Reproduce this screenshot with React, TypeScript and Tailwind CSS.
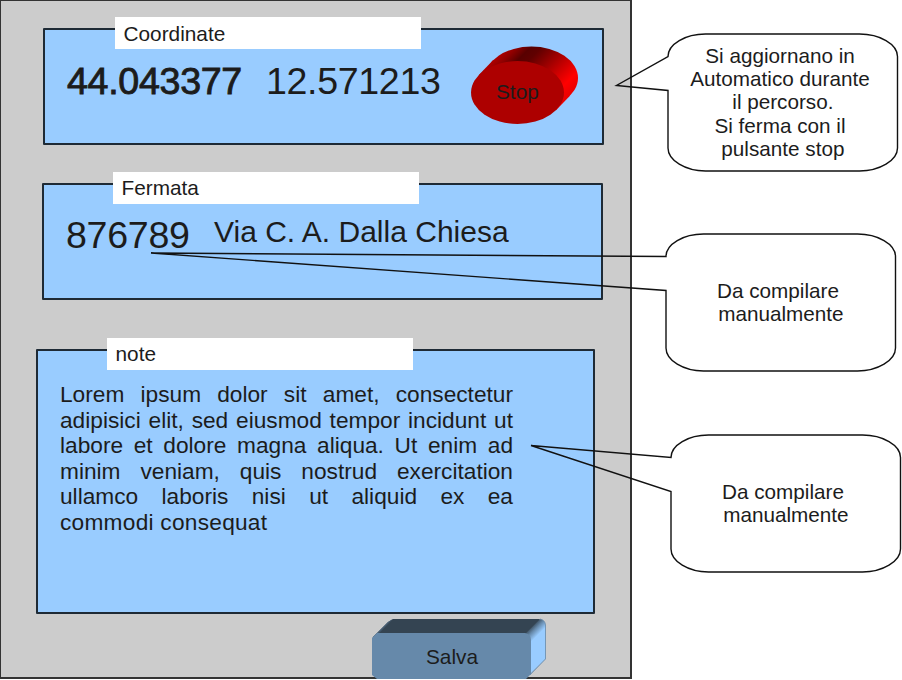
import type { ReactNode } from "react";

function Label({ children, className }: { children: ReactNode; className: string }) {
  return (
    <div
      className={`absolute flex h-8 w-[306px] items-center bg-white pl-[8.5px] text-[20.8px] ${className}`}
    >
      {children}
    </div>
  );
}

function Callout({
  tail,
  lines,
  className,
}: {
  tail: [number, number];
  lines: string[];
  className: string;
}) {
  return (
    <div className={`relative flex h-[138px] w-[230px] flex-col items-center justify-center pr-[6px] ${className}`}>
      <svg
        className="pointer-events-none absolute inset-0 overflow-visible"
        width="230"
        height="138"
        fill="none"
        stroke="#111"
        strokeWidth="1.4"
      >
        <path
          d={`M37.500 1H191.500C211.500 1 229.500 11 229.500 23.500V115C229.500 127.500 211.500 138 191.500 138H37.500C17.500 138 0 127.500 0 115V57.500L${tail[0]} ${tail[1]}L0 23.500C0 11 17.500 1 37.500 1Z`}
        />
      </svg>
      {lines.map((line) => (
        <div key={line} className="whitespace-pre text-[20.7px] leading-[23.3px]">
          {line}
        </div>
      ))}
    </div>
  );
}

function StopButton() {
  return (
    <button className="relative mt-[16px] ml-[29px] h-[79px] w-[109px]">
      <svg className="absolute inset-0" width="109" height="79">
        <defs>
          <linearGradient id="stopSide" gradientUnits="userSpaceOnUse" x1="18" y1="18" x2="74.5" y2="74.5">
            <stop offset="0" stopColor="#b00000" />
            <stop offset=".1" stopColor="#900000" />
            <stop offset=".22" stopColor="#580000" />
            <stop offset=".32" stopColor="#600000" />
            <stop offset=".85" stopColor="#ff0000" />
            <stop offset="1" stopColor="#e80000" />
          </linearGradient>
        </defs>
        <ellipse cx="60.5" cy="32" rx="46.500" ry="31.500" fill="url(#stopSide)" />
        <path d="M8 28.800L22 14.300L99 49.700L85 64.200Z" fill="url(#stopSide)" />
        <ellipse cx="46.500" cy="46.500" rx="46.500" ry="31.500" fill="#ad0000" />
      </svg>
      <span className="absolute top-[34px] left-[25px] text-[20.8px] leading-[23px]">Stop</span>
    </button>
  );
}

function SaveButton() {
  return (
    <button className="relative ml-[370px] mt-[4px] block h-[61px] w-[176px]">
      <svg className="absolute inset-0" width="176" height="61">
        <defs>
          <linearGradient id="saveRight" gradientUnits="userSpaceOnUse" x1="157" y1="11" x2="165" y2="19">
            <stop offset="0" stopColor="#344452" />
            <stop offset=".45" stopColor="#6689aa" />
            <stop offset="1" stopColor="#99ccff" />
          </linearGradient>
          <linearGradient id="saveLeft" gradientUnits="userSpaceOnUse" x1="9" y1="9" x2="12" y2="12">
            <stop offset="0" stopColor="#6689aa" />
            <stop offset="1" stopColor="#344452" />
          </linearGradient>
        </defs>
        <path d="M2 19L17 4L22 1H168L174 6V41L158 57Z" fill="#344452" />
        <path d="M1 20L17 4L22 1L8 16Z" fill="url(#saveLeft)" />
        <path d="M154 16L169 1Q174 2 174.500 7V41L158 57V20Z" fill="url(#saveRight)" />
        <path d="M169 1Q174 2 174.500 7V41L159 57" fill="none" stroke="#6689aa" strokeWidth=".8" />
        <path d="M6 15H154Q160 16 160 22V56L155 61H6L1 57V20Z" fill="#6689aa" />
      </svg>
      <span className="absolute top-[27px] left-[55px] text-[20.8px] leading-[23px]">Salva</span>
    </button>
  );
}

const noteLines = [
  "Lorem ipsum dolor sit amet, consectetur",
  "adipisici elit, sed eiusmod tempor incidunt ut",
  "labore et dolore magna aliqua. Ut enim ad",
  "minim veniam, quis nostrud exercitation",
  "ullamco laboris nisi ut aliquid ex ea",
];

export default function App() {
  return (
    <div className="flex h-[680px] w-[902px] overflow-hidden bg-white font-['Liberation_Sans',Arial,sans-serif] text-[#1c1c1c]">
      <main className="h-[679px] w-[632px] shrink-0 border-2 border-t-1 border-l-1 border-[#333] bg-[#ccc] pt-[27px]">
        <section className="relative ml-[42px] flex h-[117px] w-[561px] items-start rounded-[1px] border-2 border-[#1e2a35] bg-[#99ccff]">
          <Label className="-top-[13px] left-[70px] pt-px">Coordinate</Label>
          <div className="mt-[30px] ml-[22px] w-[177px] whitespace-nowrap text-[37.6px] leading-[42px] tracking-[-0.3px] [-webkit-text-stroke:0.9px_#1c1c1c]">
            44.043377
          </div>
          <div className="mt-[30px] ml-[22px] w-[176px] whitespace-nowrap text-[37.6px] leading-[42px] tracking-[-0.35px]">
            12.571213
          </div>
          <StopButton />
        </section>

        <section className="relative mt-[38px] ml-[41px] flex h-[117px] w-[561px] items-start rounded-[1px] border-2 border-[#1e2a35] bg-[#99ccff]">
          <Label className="-top-[13px] left-[69px] pb-px">Fermata</Label>
          <div className="mt-[29px] ml-[22px] w-[125px] whitespace-nowrap text-[37.6px] leading-[42px] tracking-[-0.3px]">
            876789
          </div>
          <div className="mt-[29px] ml-[23px] whitespace-nowrap text-[30px] leading-[35px]">Via C. A. Dalla Chiesa</div>
        </section>

        <section className="relative mt-[49px] ml-[35px] h-[265px] w-[559px] rounded-[1px] border-2 border-[#1e2a35] bg-[#99ccff]">
          <Label className="-top-[13px] left-[69px] pb-px">note</Label>
          <div className="mt-[31px] ml-[22px] w-[453px] text-[22.7px] leading-[25.6px] whitespace-nowrap">
            {noteLines.map((line) => (
              <p key={line} className="[text-align-last:justify]">
                {line}
              </p>
            ))}
            <p className="tracking-[0.25px]">commodi consequat</p>
          </div>
        </section>

        <SaveButton />
      </main>

      <aside className="flex shrink-0 flex-col pt-[33px]">
        <Callout
          className="ml-[36px]"
          tail={[-51.5, 52.5]}
          lines={["Si aggiornano in", "Automatico durante", " il percorso.", "Si ferma con il", " pulsante stop"]}
        />
        <Callout className="mt-[62px] ml-[34px]" tail={[-515, 20]} lines={["Da compilare", " manualmente"]} />
        <Callout className="mt-[63px] ml-[39px]" tail={[-140, 11.5]} lines={["Da compilare", " manualmente"]} />
      </aside>
    </div>
  );
}
